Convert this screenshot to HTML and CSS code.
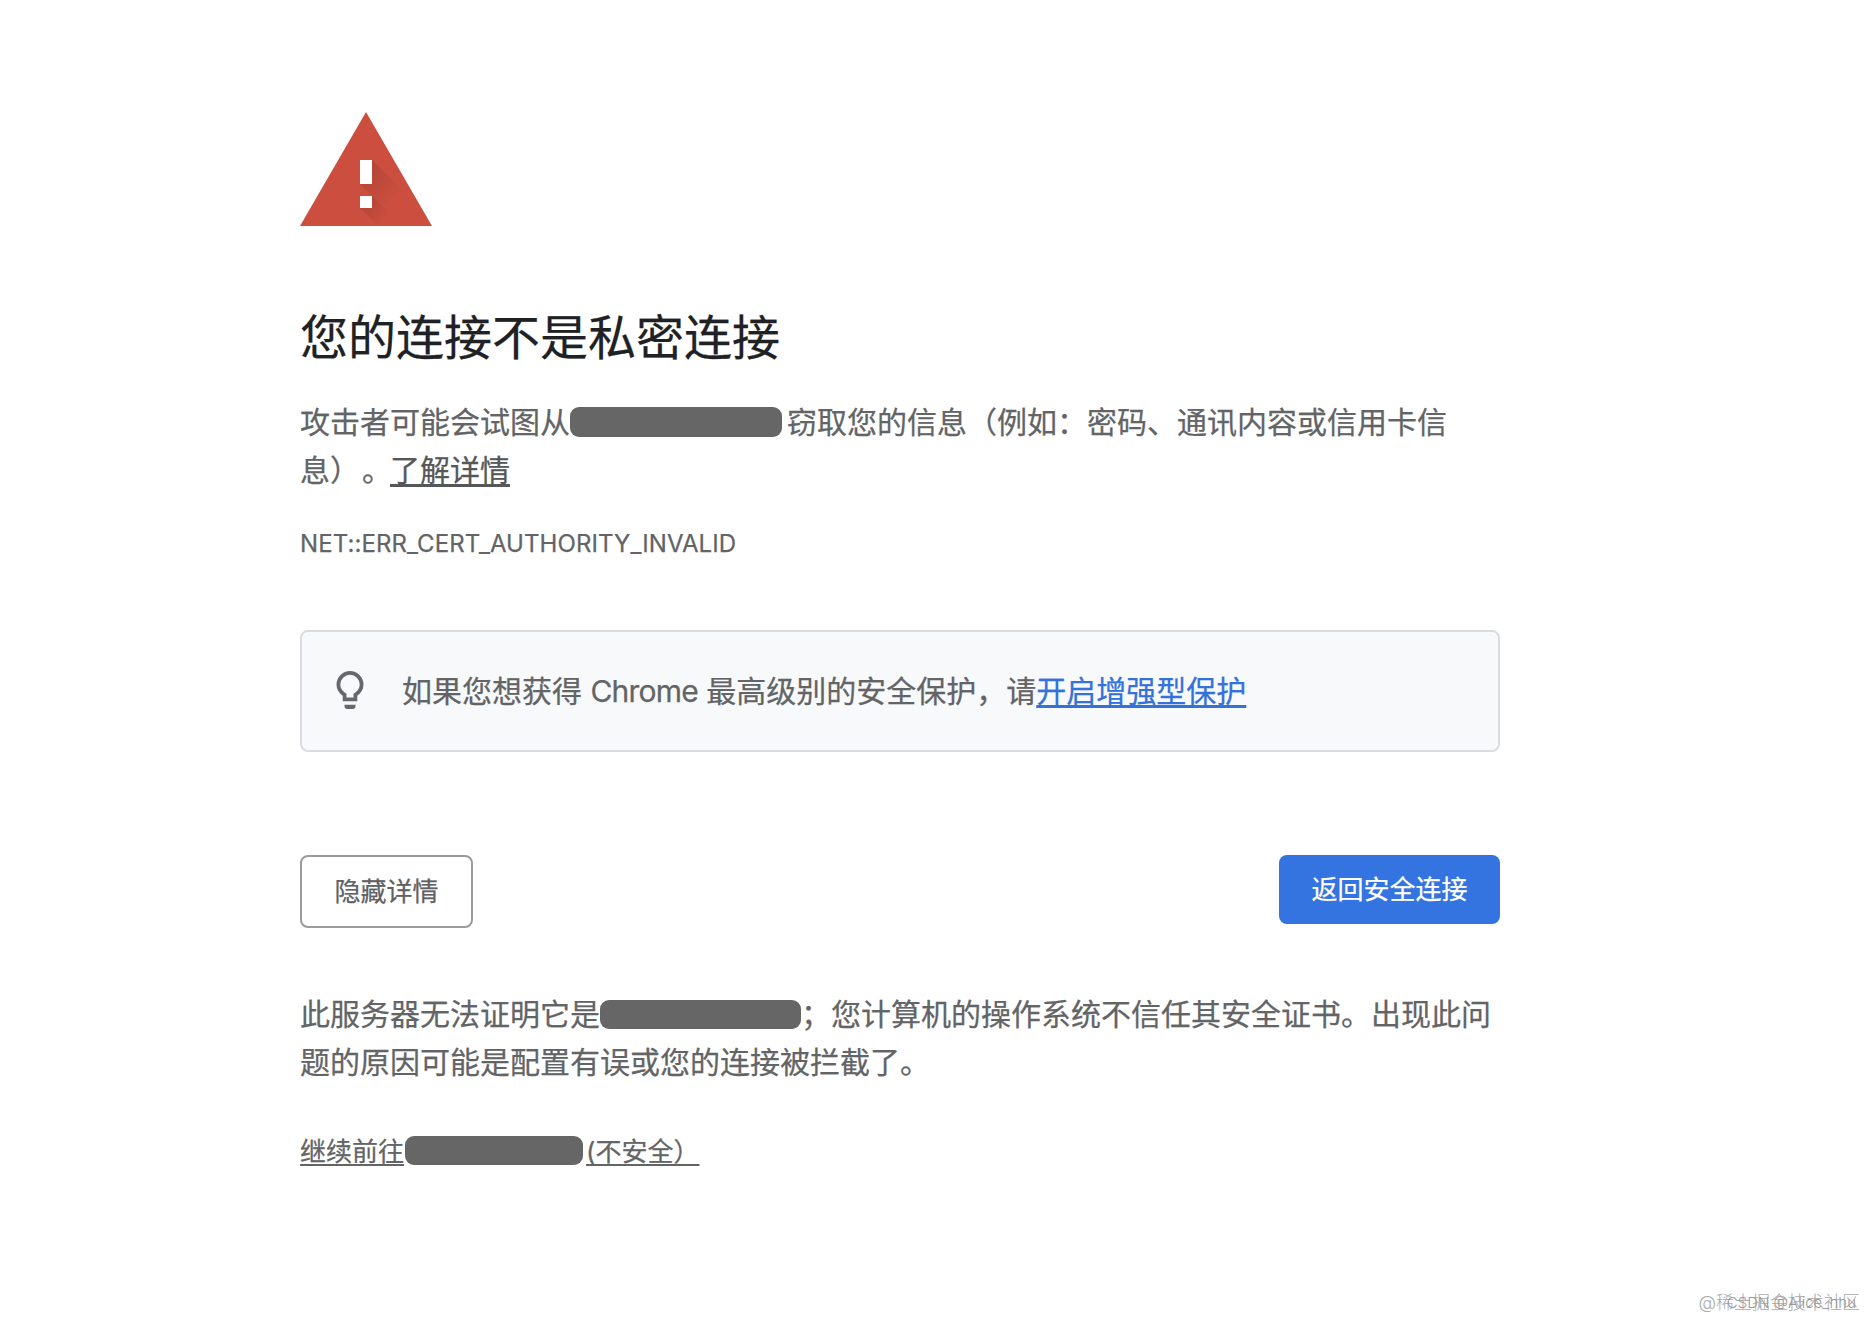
FILE: index.html
```html
<!DOCTYPE html>
<html lang="zh-CN">
<head>
  <meta charset="UTF-8">
  <title>隐私设置错误</title>
  <link rel="stylesheet" href="styles.css">
</head>
<body>

<div class="main">
  <svg class="icon" width="132" height="114" viewBox="0 0 132 114">
    <defs>
      <linearGradient id="shade" gradientUnits="userSpaceOnUse" x1="64" y1="56" x2="94" y2="86">
        <stop offset="0" stop-color="#000" stop-opacity=".12"/>
        <stop offset="1" stop-color="#000" stop-opacity="0"/>
      </linearGradient>
      <linearGradient id="shade-dot" gradientUnits="userSpaceOnUse" x1="66" y1="90" x2="84" y2="108">
        <stop offset="0" stop-color="#000" stop-opacity=".12"/>
        <stop offset="1" stop-color="#000" stop-opacity="0"/>
      </linearGradient>
    </defs>
    <path fill="#cb4e3e" d="M66 0L132 114H0z"/>
    <path fill="url(#shade)" d="M72 48L110 86V114H102L60 72z"/>
    <path fill="url(#shade-dot)" d="M72 84L102 114H78L60 96z"/>
    <path fill="#fff" d="M60 48h12v24H60zM60 84h12v12H60z"/>
  </svg>

  <h1>您的连接不是私密连接</h1>
  <p class="text">攻击者可能会试图从<span class="mask mask-first"></span>窃取您的信息（例如：密码、通讯内容或信用卡信<br>息）<span class="stop">。</span><a href="#">了解详情</a></p>
  <div class="code">NET::ERR_CERT_AUTHORITY_INVALID</div>

  <div class="tip">
    <svg class="bulb" width="28" height="38" viewBox="0 0 28 38">
      <path fill="none" stroke="#66696b" stroke-width="3.800" d="M8.600 28.400V23.800C4.700 21.300 2.400 17.700 2.400 13.500a11.600 11.600 0 0 1 23.200 0c0 4.200-2.300 7.800-6.200 10.300v4.600z"/>
      <path fill="#66696b" d="M8.500 33.700h11v1.300q0 3-3 3h-5q-3 0-3-3z"/>
    </svg>
    <span>如果您想获得 <span class="name">Chrome</span> 最高级别的安全保护，请<a href="#">开启增强型保护</a></span>
  </div>

  <div class="buttons">
    <button class="details">隐藏详情</button>
    <button class="back">返回安全连接</button>
  </div>

  <p class="text more">此服务器无法证明它是<span class="mask mask-second"></span>；您计算机的操作系统不信任其安全证书。出现此问<br>题的原因可能是配置有误或您的连接被拦截了。</p>
  <a class="proceed" href="#">继续前往<span class="mask mask-third"></span><span class="unsafe">(不安全）</span></a>
</div>

<div class="watermark">@稀土掘金技术社区<span>CSDN @Alice_hhu</span></div>

</body>
</html>
```

FILE: styles.css
```css
body{
  margin: 0;
  background: #fff;
  color: #626466;
  font-family: Inter, "Noto Sans CJK SC", sans-serif;
  font-size: 30px;
  line-height: 48px;
  text-spacing-trim: space-all;
}

.main{
  width: 1200px;
  margin-left: 300px;
  padding-top: 112px;
  -webkit-text-stroke: .25px;
}

.icon{
  display: block;
}

h1{
  margin: 80px 0 0;
  color: #202124;
  font-size: 48px;
  font-weight: 400;
  line-height: 64px;
}

.text{
  margin: 28px 0 0;
  white-space: nowrap;
}

.stop{
  margin: 0 -2px 0 2px;
}

.text a{
  color: #555759;
}

a{
  color: inherit;
  text-decoration-thickness: 2px;
  text-underline-offset: 3px;
  text-decoration-skip-ink: none;
}

.text a,.tip a{
  text-decoration-thickness: 3px;
}

.mask{
  display: inline-block;
  height: 30px;
  border-radius: 9px;
  background: #666;
  vertical-align: -4px;
}

.mask-first{
  width: 212px;
  margin: 0 5px 0 0;
}

.mask-second{
  width: 201px;
  height: 29px;
}

.mask-third{
  width: 178px;
  height: 29px;
  margin-left: 1px;
}

.code{
  margin-top: 32px;
  font-size: 24px;
  line-height: 36px;
  letter-spacing: .08px;
}

.tip{
  display: flex;
  align-items: center;
  box-sizing: border-box;
  height: 122px;
  margin-top: 68px;
  padding-left: 34px;
  border: 2px solid #dadce0;
  border-radius: 8px;
  background: #f8f9fb;
}

.bulb{
  margin: 0 38px 3px 0;
}

.name{
  letter-spacing: -.8px;
}

.tip a{
  color: #3472db;
}

.buttons{
  display: flex;
  justify-content: space-between;
  align-items: flex-start;
  margin-top: 103px;
}

button{
  padding: 0;
  border: 0;
  border-radius: 8px;
  font: inherit;
  font-size: 26px;
}

.details{
  width: 173px;
  height: 73px;
  border: 2px solid #999b9d;
  background: #fff;
  color: #5f6164;
}

.back{
  width: 221px;
  height: 69px;
  background: #3474e0;
  color: #fff;
}

.more{
  margin-top: 62px;
}

.proceed{
  display: inline-block;
  margin-top: 42px;
  font-size: 26px;
}

.unsafe{
  padding-left: 3px;
}

.watermark{
  position: absolute;
  right: 6px;
  bottom: 3px;
  color: #aaa;
  font-size: 18px;
  font-weight: 300;
  line-height: 24px;
}

.watermark span{
  position: absolute;
  right: 4px;
  bottom: 0;
  color: #999;
  font-size: 15px;
  white-space: nowrap;
}
```
